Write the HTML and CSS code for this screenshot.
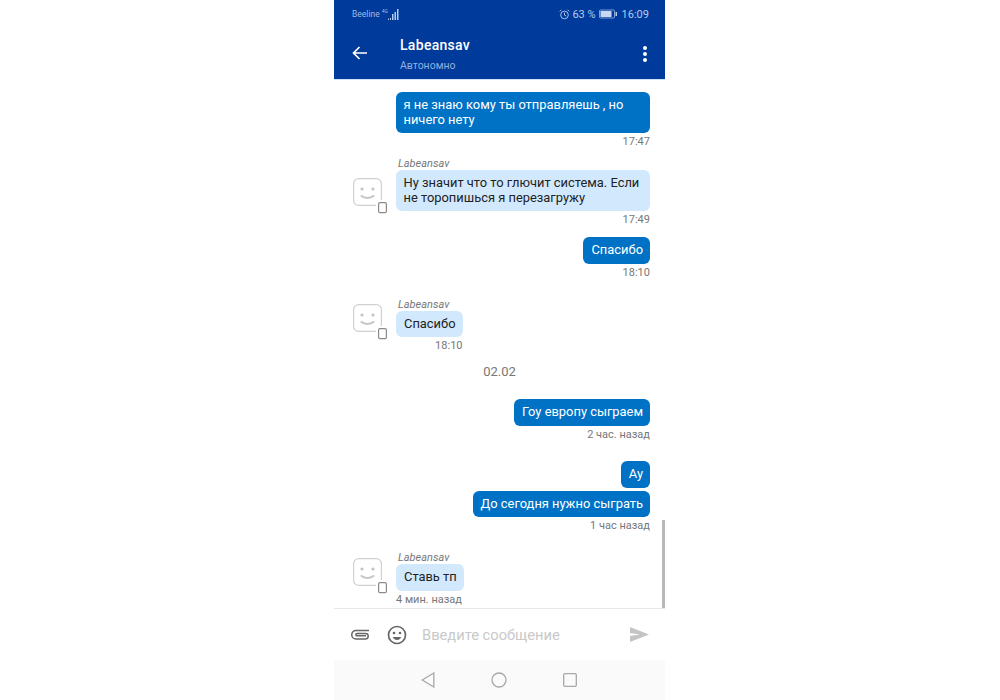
FILE: index.html
```html
<!DOCTYPE html>
<html lang="en">
<head>
  <meta charset="UTF-8">
  <title>Labeansav</title>
  <link rel="stylesheet" href="styles.css">
</head>
<body>
  <div class="phone">
    <div class="top">
      <div class="status">
        <div class="carrier">
          <span>Beeline</span>
          <span class="net">4G</span>
          <svg width="11" height="11" viewBox="0 0 11 11"><path d="M0 9.500h1V11H0zM2 9h1v2H2zM4 5h1.500v6H4zM6.500 3H8v8H6.500zM9 0h1.500v11H9z" fill="#b5cbee"/></svg>
        </div>
        <div class="status-right">
          <svg class="alarm" width="11" height="11" viewBox="0 0 12 12" fill="none" stroke="#b5cbee" stroke-width="1"><circle cx="6" cy="6.500" r="4.200"/><path d="M6 4v2.700l1.800 1M.8 2.600 2.600.8M11.200 2.600 9.400.8"/></svg>
          <span class="pct">63 %</span>
          <svg width="18" height="10" viewBox="0 0 18 10"><rect x=".5" y="1" width="15" height="8" rx="1" fill="none" stroke="#7f9fd6"/><rect x="1.500" y="2" width="11" height="6" fill="#c9d8f2"/><rect x="16.500" y="3" width="1.500" height="4" fill="#b5cbee"/></svg>
          <span class="clock">16:09</span>
        </div>
      </div>
      <div class="appbar">
        <svg class="back" width="15" height="14" viewBox="0 0 15 14" fill="none" stroke="#fff" stroke-width="1.700"><path d="M15 7H1.500M7.500 1 1.500 7l6 6"/></svg>
        <div class="title">
          <div class="name">Labeansav</div>
          <div class="sub">Автономно</div>
        </div>
        <div class="dots"><i></i><i></i><i></i></div>
      </div>
    </div>

    <div class="messages">
      <div class="scrollbar"></div>

      <div class="msg out first">
        <div class="bubble wide">я не знаю кому ты отправляешь , но ничего нету</div>
        <div class="meta">17:47</div>
      </div>

      <div class="msg in gap-in-a">
        <div class="avatar">
          <svg width="35" height="36" viewBox="0 0 35 36" fill="none">
            <rect x=".6" y=".6" width="27.800" height="26.800" rx="5" stroke="#d0d0d0" stroke-width="1.200"/>
            <circle cx="9" cy="11" r="1.600" fill="#c4c4c4"/><circle cx="20" cy="11" r="1.600" fill="#c4c4c4"/>
            <path d="M8.500 18c3 2.500 9 2.500 12 0" stroke="#c4c4c4" stroke-width="2" stroke-linecap="round"/>
            <rect x="23" y="22" width="12" height="14" fill="#fff"/>
            <rect x="25.600" y="24.600" width="7.800" height="10" rx="1.300" stroke="#8a8a8a" stroke-width="1.200"/>
          </svg>
        </div>
        <div class="body">
          <div class="author">Labeansav</div>
          <div class="bubble wide">Ну значит что то глючит система. Если не торопишься я перезагружу</div>
          <div class="meta right">17:49</div>
        </div>
      </div>

      <div class="msg out gap-out-a">
        <div class="bubble">Спасибо</div>
        <div class="meta">18:10</div>
      </div>

      <div class="msg in gap-in-b">
        <div class="avatar">
          <svg width="35" height="36" viewBox="0 0 35 36" fill="none">
            <rect x=".6" y=".6" width="27.800" height="26.800" rx="5" stroke="#d0d0d0" stroke-width="1.200"/>
            <circle cx="9" cy="11" r="1.600" fill="#c4c4c4"/><circle cx="20" cy="11" r="1.600" fill="#c4c4c4"/>
            <path d="M8.500 18c3 2.500 9 2.500 12 0" stroke="#c4c4c4" stroke-width="2" stroke-linecap="round"/>
            <rect x="23" y="22" width="12" height="14" fill="#fff"/>
            <rect x="25.600" y="24.600" width="7.800" height="10" rx="1.300" stroke="#8a8a8a" stroke-width="1.200"/>
          </svg>
        </div>
        <div class="body">
          <div class="author">Labeansav</div>
          <div class="bubble">Спасибо</div>
          <div class="meta right">18:10</div>
        </div>
      </div>

      <div class="date">02.02</div>

      <div class="msg out gap-out-b">
        <div class="bubble">Гоу европу сыграем</div>
        <div class="meta">2 час. назад</div>
      </div>

      <div class="msg out gap-out-c">
        <div class="bubble">Ау</div>
        <div class="bubble next">До сегодня нужно сыграть</div>
        <div class="meta">1 час назад</div>
      </div>

      <div class="msg in gap-in-c">
        <div class="avatar">
          <svg width="35" height="36" viewBox="0 0 35 36" fill="none">
            <rect x=".6" y=".6" width="27.800" height="26.800" rx="5" stroke="#d0d0d0" stroke-width="1.200"/>
            <circle cx="9" cy="11" r="1.600" fill="#c4c4c4"/><circle cx="20" cy="11" r="1.600" fill="#c4c4c4"/>
            <path d="M8.500 18c3 2.500 9 2.500 12 0" stroke="#c4c4c4" stroke-width="2" stroke-linecap="round"/>
            <rect x="23" y="22" width="12" height="14" fill="#fff"/>
            <rect x="25.600" y="24.600" width="7.800" height="10" rx="1.300" stroke="#8a8a8a" stroke-width="1.200"/>
          </svg>
        </div>
        <div class="body">
          <div class="author">Labeansav</div>
          <div class="bubble">Ставь тп</div>
          <div class="meta">4 мин. назад</div>
        </div>
      </div>
    </div>

    <div class="composer">
      <svg class="clip" width="19" height="11" viewBox="0 0 19 11" fill="none" stroke="#666" stroke-width="1.500"><path d="M18 1.500H5a4 4 0 0 0 0 8.500h9.500a2.700 2.700 0 0 0 0-5.400H6a1.100 1.100 0 0 0 0 2.200h9"/></svg>
      <svg class="smile" width="20" height="20" viewBox="0 0 20 20" fill="none"><circle cx="10" cy="10" r="8.500" stroke="#666" stroke-width="1.700"/><circle cx="7" cy="8" r="1.300" fill="#666"/><circle cx="13" cy="8" r="1.300" fill="#666"/><path d="M5.800 12h8.400c-.8 2-2.300 3-4.200 3s-3.400-1-4.200-3z" fill="#666"/></svg>
      <div class="placeholder">Введите сообщение</div>
      <svg class="send" width="19" height="15" viewBox="0 0 19 15"><path d="M0 0 19 7.500 0 15V9l10-1.500L0 6z" fill="#c4c4c4"/></svg>
    </div>

    <div class="navbar">
      <svg width="14" height="16" viewBox="0 0 14 16" fill="none" stroke="#a8a8a8" stroke-width="1.300"><path d="M12.800 1 1.200 8l11.600 7z"/></svg>
      <svg width="16" height="16" viewBox="0 0 16 16" fill="none" stroke="#a8a8a8" stroke-width="1.300"><circle cx="8" cy="8" r="7"/></svg>
      <svg width="14" height="14" viewBox="0 0 14 14" fill="none" stroke="#a8a8a8" stroke-width="1.300"><rect x=".7" y=".7" width="12.600" height="12.600" rx="1"/></svg>
    </div>
  </div>
</body>
</html>
```

FILE: styles.css
```css
* {
  margin: 0;
  padding: 0;
  box-sizing: border-box;
}

body {
  background: #fff;
  font-family: Roboto, "Noto Sans", sans-serif;
}

.phone {
  width: 331px;
  height: 700px;
  margin-left: 334px;
  display: flex;
  flex-direction: column;
  overflow: hidden;
}

/* Status bar and app bar */
.top {
  height: 79px;
  flex: none;
  background: #003a9a;
  color: #fff;
  box-shadow: 0 1px 0 #cfe4fb;
  position: relative;
}

.status {
  height: 28px;
  padding: 0 16px 0 18px;
  display: flex;
  justify-content: space-between;
  align-items: center;
  color: #b5cbee;
  font-size: 11px;
}

.carrier {
  display: flex;
  align-items: center;
  gap: 2px;
  font-size: 8.5px;
  color: #9fbbe6;
}

.net {
  font-size: 5px;
  margin-bottom: 6px;
  margin-right: -2px;
}

.status-right {
  display: flex;
  align-items: center;
  gap: 3px;
}

.alarm {
  margin-right: -1px;
}

.clock {
  margin-left: 2px;
}

.appbar {
  height: 51px;
  display: flex;
  align-items: flex-start;
  padding: 0 18px;
}

.back {
  margin-top: 18px;
  flex: none;
}

.title {
  margin-left: 33px;
  flex: 1;
}

.name {
  font-size: 14px;
  font-weight: 500;
  line-height: 18px;
  margin-top: 8px;
  letter-spacing: 0.3px;
}

.sub {
  font-size: 10.5px;
  line-height: 13px;
  margin-top: 5px;
  color: #8fb0e2;
}

.dots {
  margin-top: 18px;
  display: flex;
  flex-direction: column;
  gap: 2px;
}

.dots i {
  width: 4px;
  height: 4px;
  border-radius: 50%;
  background: #fff;
}

/* Message list */
.messages {
  height: 530px;
  flex: none;
  padding: 0 15px 0 18px;
  position: relative;
  border-bottom: 1px solid #e8e8e8;
}

.scrollbar {
  position: absolute;
  right: 0;
  bottom: 0;
  width: 3px;
  height: 88px;
  background: #b8b8b8;
}

.msg {
  display: flex;
}

.msg.out {
  flex-direction: column;
  align-items: flex-end;
}

.msg.in {
  align-items: flex-end;
}

.first { padding-top: 13px; }
.gap-in-a { margin-top: 10px; }
.gap-out-a { margin-top: 11px; }
.gap-in-b { margin-top: 20px; }
.gap-out-b { margin-top: 20px; }
.gap-out-c { margin-top: 20.5px; }
.gap-in-c { margin-top: 20px; }

.bubble {
  background: #0072c6;
  color: #fff;
  font-size: 12.9px;
  line-height: 14.5px;
  padding: 6px 7px 6px 8px;
  border-radius: 6px;
  width: fit-content;
}

.bubble.wide {
  width: 254px;
  padding-left: 7.5px;
}

.bubble.next {
  margin-top: 3px;
}

.in .bubble {
  background: #d2e9fd;
  color: #222;
}

.avatar {
  width: 44px;
  flex: none;
  padding-left: 1px;
  padding-bottom: 12px;
}

.avatar svg {
  display: block;
}

.body {
  display: flex;
  flex-direction: column;
}

.author {
  font-size: 11px;
  font-style: italic;
  line-height: 12px;
  color: #777;
  padding-left: 2px;
}

.meta {
  font-size: 11px;
  line-height: 12px;
  margin-top: 3px;
  color: #777;
}

.meta.right {
  text-align: right;
}

.date {
  text-align: center;
  font-size: 13px;
  line-height: 14px;
  color: #777;
  margin-top: 13px;
  padding-right: 3px;
}

/* Input row */
.composer {
  height: 51px;
  flex: none;
  display: flex;
  align-items: center;
  padding: 0 16px 0 17px;
}

.clip {
  flex: none;
}

.smile {
  flex: none;
  margin-left: 17px;
}

.placeholder {
  flex: 1;
  margin-left: 15px;
  font-size: 14.7px;
  color: #c9c9c9;
}

.send {
  flex: none;
}

/* Android nav */
.navbar {
  height: 40px;
  flex: none;
  background: #fafafa;
  display: flex;
  align-items: center;
  justify-content: center;
  gap: 56px;
  padding-right: 2px;
}
```
